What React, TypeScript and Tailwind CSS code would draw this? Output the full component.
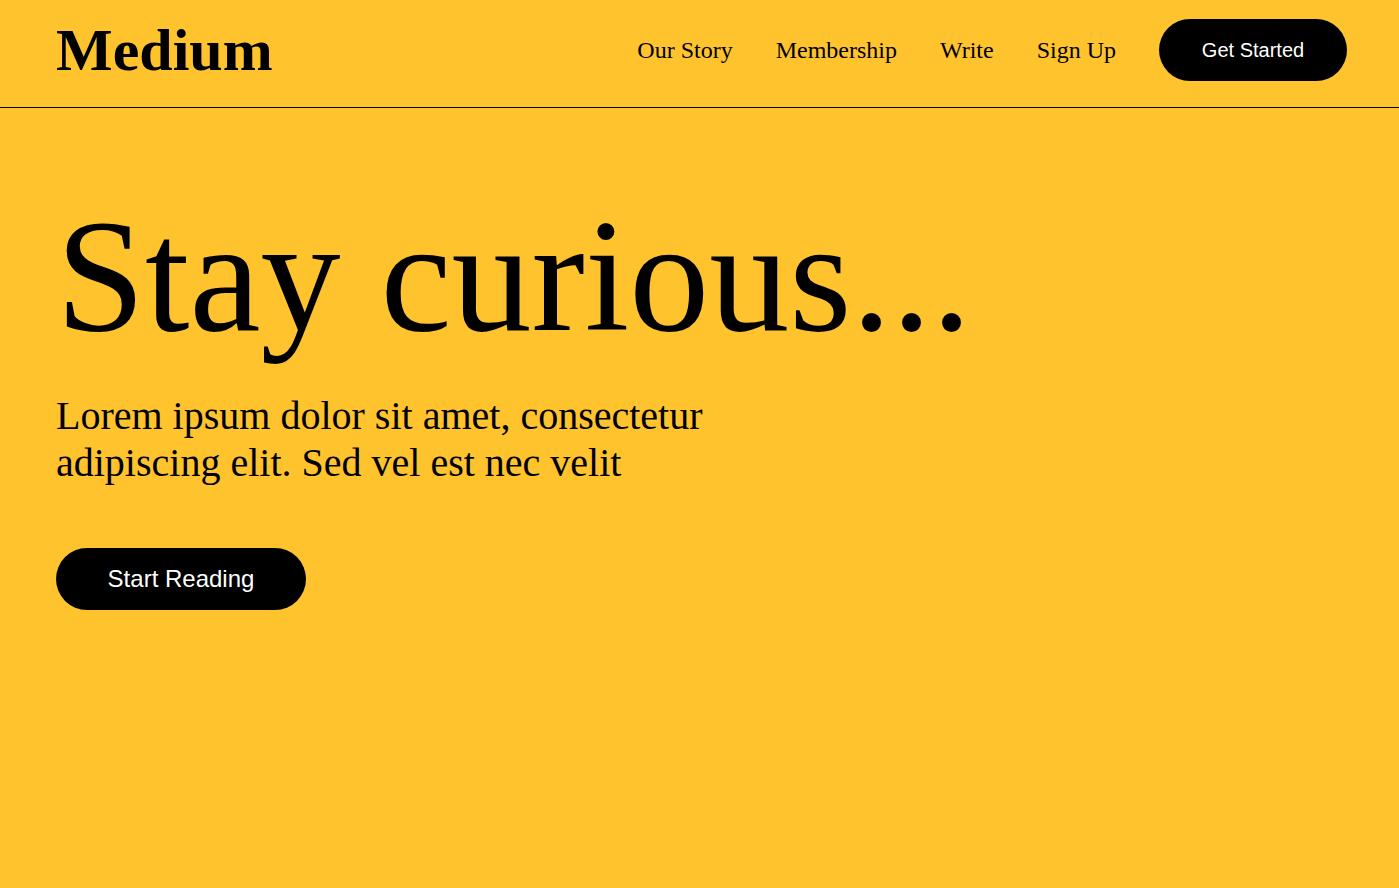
export default function App() {
  const serif = { fontFamily: '"Liberation Serif", "Times New Roman", serif' };
  const sans = { fontFamily: '"Liberation Sans", Arial, sans-serif' };
  return (
    <div className="min-h-[888px] w-full bg-[#ffc32e] text-black" style={serif}>
      <header className="flex items-center justify-between border-b border-black pl-[56px] pr-[52px] pt-[19px] pb-[26px]">
        <div className="text-[60px] font-bold leading-none">Medium</div>
        <nav className="flex items-center gap-[43px] text-[24px] leading-none">
          <a>Our Story</a>
          <a>Membership</a>
          <a>Write</a>
          <a>Sign Up</a>
          <button
            className="flex h-[62px] w-[188px] items-center justify-center rounded-full bg-black text-[20px] text-white"
            style={sans}
          >
            Get Started
          </button>
        </nav>
      </header>
      <main className="pl-[56px] pt-[88px]">
        <h1 className="text-[160px] leading-none font-normal">Stay curious...</h1>
        <p className="mt-[36px] max-w-[720px] text-[40px] leading-[47px]">
          Lorem ipsum dolor sit amet, consectetur adipiscing elit. Sed vel est nec velit
        </p>
        <button
          className="mt-[62px] flex h-[62px] w-[250px] items-center justify-center rounded-full bg-black text-[24px] text-white"
          style={sans}
        >
          Start Reading
        </button>
      </main>
    </div>
  );
}
